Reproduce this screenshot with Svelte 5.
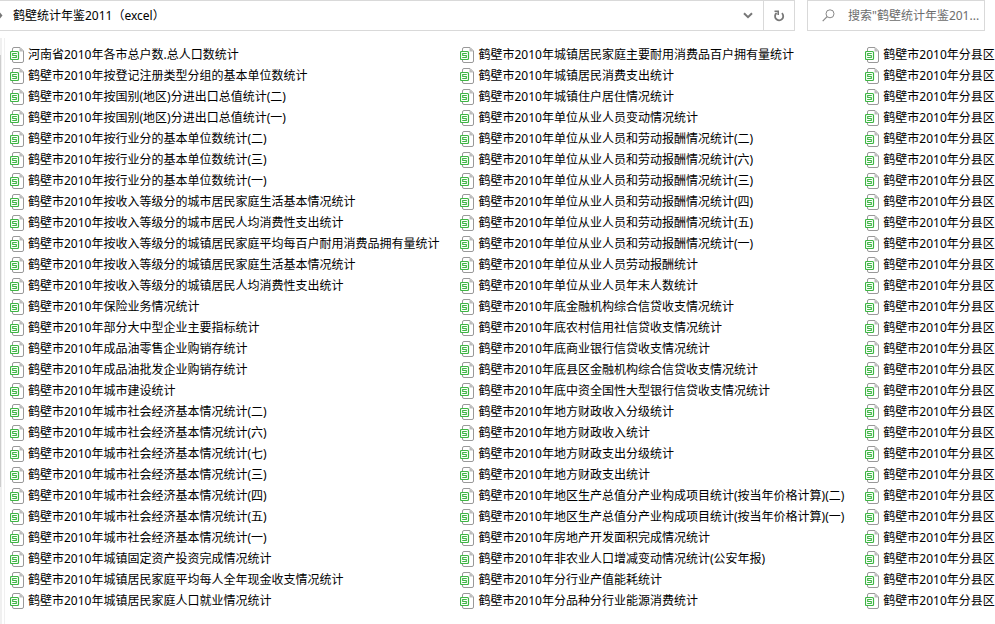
<script>
  const city = '鹤壁市2010年';

  const first = [
    '河南省2010年各市总户数.总人口数统计',
    ...[
      '按登记注册类型分组的基本单位数统计',
      '按国别(地区)分进出口总值统计(二)',
      '按国别(地区)分进出口总值统计(一)',
      '按行业分的基本单位数统计(二)',
      '按行业分的基本单位数统计(三)',
      '按行业分的基本单位数统计(一)',
      '按收入等级分的城市居民家庭生活基本情况统计',
      '按收入等级分的城市居民人均消费性支出统计',
      '按收入等级分的城镇居民家庭平均每百户耐用消费品拥有量统计',
      '按收入等级分的城镇居民家庭生活基本情况统计',
      '按收入等级分的城镇居民人均消费性支出统计',
      '保险业务情况统计',
      '部分大中型企业主要指标统计',
      '成品油零售企业购销存统计',
      '成品油批发企业购销存统计',
      '城市建设统计',
      '城市社会经济基本情况统计(二)',
      '城市社会经济基本情况统计(六)',
      '城市社会经济基本情况统计(七)',
      '城市社会经济基本情况统计(三)',
      '城市社会经济基本情况统计(四)',
      '城市社会经济基本情况统计(五)',
      '城市社会经济基本情况统计(一)',
      '城镇固定资产投资完成情况统计',
      '城镇居民家庭平均每人全年现金收支情况统计',
      '城镇居民家庭人口就业情况统计'
    ].map((name) => city + name)
  ];

  const second = [
    '城镇居民家庭主要耐用消费品百户拥有量统计',
    '城镇居民消费支出统计',
    '城镇住户居住情况统计',
    '单位从业人员变动情况统计',
    '单位从业人员和劳动报酬情况统计(二)',
    '单位从业人员和劳动报酬情况统计(六)',
    '单位从业人员和劳动报酬情况统计(三)',
    '单位从业人员和劳动报酬情况统计(四)',
    '单位从业人员和劳动报酬情况统计(五)',
    '单位从业人员和劳动报酬情况统计(一)',
    '单位从业人员劳动报酬统计',
    '单位从业人员年末人数统计',
    '底金融机构综合信贷收支情况统计',
    '底农村信用社信贷收支情况统计',
    '底商业银行信贷收支情况统计',
    '底县区金融机构综合信贷收支情况统计',
    '底中资全国性大型银行信贷收支情况统计',
    '地方财政收入分级统计',
    '地方财政收入统计',
    '地方财政支出分级统计',
    '地方财政支出统计',
    '地区生产总值分产业构成项目统计(按当年价格计算)(二)',
    '地区生产总值分产业构成项目统计(按当年价格计算)(一)',
    '房地产开发面积完成情况统计',
    '非农业人口增减变动情况统计(公安年报)',
    '分行业产值能耗统计',
    '分品种分行业能源消费统计'
  ].map((name) => city + name);

  const third = Array.from({ length: 27 }, () => city + '分县区');

  const columns = [first, second, third];
</script>

<div class="window">
  <header>
    <div class="address">
      <svg class="crumb" width="3" height="9" viewBox="0 0 3 9" aria-hidden="true">
        <path d="M0 1.5 2.5 4.5 0 7.5Z" fill="#777" />
      </svg>
      <a class="path" href="#folder">鹤壁统计年鉴2011（excel）</a>
      <button class="history" aria-label="历史记录">
        <svg width="10" height="7" viewBox="0 0 10 7" aria-hidden="true">
          <path d="M1 1.2 5 5.2 9 1.2" fill="none" stroke="#777" stroke-width="2" />
        </svg>
      </button>
      <button class="refresh" aria-label="刷新">
        <svg width="12" height="12" viewBox="0 0 12 12" aria-hidden="true">
          <path d="M8.9 3.2A4.1 4.1 0 1 1 3.6 3" fill="none" stroke="#777" stroke-width="1.8" />
          <path d="M1.5 1.2H5.2V5" fill="none" stroke="#777" stroke-width="1.6" />
        </svg>
      </button>
    </div>
    <label class="search">
      <svg width="13" height="13" viewBox="0 0 13 13" aria-hidden="true">
        <circle cx="8" cy="4.8" r="4" fill="none" stroke="#888" />
        <path d="M5.1 7.7 .7 12.1" stroke="#888" stroke-width="1.2" />
      </svg>
      <input type="text" aria-label="搜索" placeholder={'搜索"鹤壁统计年鉴201...'} />
    </label>
  </header>

  <main>
    <div class="scrollbar"><div class="thumb"></div></div>
    {#each columns as files}
      <ul>
        {#each files as file}
          <li>
            <a href="#file">
              <svg width="14" height="16" viewBox="0 0 14 16" aria-hidden="true">
                <path d="M2.5 4V2Q2.5 .5 4 .5H10L13.5 4V14Q13.5 15.5 12 15.5H4Q2.5 15.5 2.5 14V13" fill="#fff" stroke="#999" />
                <path d="M9.5 .5V4.5H13.5Z" fill="#bbb" />
                <rect x=".5" y="4.5" width="8" height="8" rx="1" fill="#fff" stroke="#3db543" stroke-width="1.2" />
                <path d="M6.8 6.5H2.7V8.5H6.3V10.5H2.2" fill="none" stroke="#3db543" stroke-width="1.1" />
              </svg>
              <span>{file}</span>
            </a>
          </li>
        {/each}
      </ul>
    {/each}
  </main>
</div>

<style>
  :global(body) {
    margin: 0;
    background: #fff;
  }

  .window {
    height: 100vh;
    display: flex;
    flex-direction: column;
    overflow: hidden;
    font: 12px/21px 'Noto Sans', 'Noto Sans CJK SC', sans-serif;
    color: #000;
  }

  a {
    color: inherit;
    text-decoration: none;
  }

  header {
    display: flex;
    gap: 12px;
    padding-right: 10px;
  }

  .address,
  .search {
    box-sizing: border-box;
    height: 31px;
    border: 1px solid #d9d9d9;
    display: flex;
    align-items: center;
  }

  .address {
    flex: 1;
    border-left: 0;
  }

  .path {
    flex: 1;
    margin-left: 10px;
  }

  button {
    display: flex;
    align-items: center;
    justify-content: center;
    width: 30px;
    height: 100%;
    padding: 0;
    border: 0;
    background: none;
  }

  .refresh {
    width: 31px;
    border-left: 1px solid #d9d9d9;
  }

  .search {
    width: 178px;
    padding-left: 14px;
    gap: 13px;
  }

  .search svg {
    flex: none;
  }

  input {
    flex: 1;
    min-width: 0;
    padding: 0;
    border: 0;
    outline: 0;
    background: none;
    font: inherit;
    color: #6d6d6d;
  }

  input::placeholder {
    color: #6d6d6d;
    opacity: 1;
  }

  main {
    flex: 1;
    display: flex;
    align-items: flex-start;
    gap: 21px;
    padding-top: 7px;
    overflow: hidden;
  }

  .scrollbar {
    box-sizing: border-box;
    flex: none;
    align-self: stretch;
    width: 5px;
    margin-right: -16px;
    padding-top: 17px;
    border-right: 1px solid #f0f0f0;
    background: linear-gradient(to right, #f0f0f0 2px, #fff 2px);
  }

  .thumb {
    width: 1px;
    height: 76%;
    background: #cdcdcd;
  }

  ul {
    flex: none;
    margin: 0;
    padding: 6px 0 0;
    list-style: none;
  }

  li a {
    display: flex;
    align-items: center;
    gap: 4px;
    height: 21px;
    white-space: nowrap;
  }
</style>
